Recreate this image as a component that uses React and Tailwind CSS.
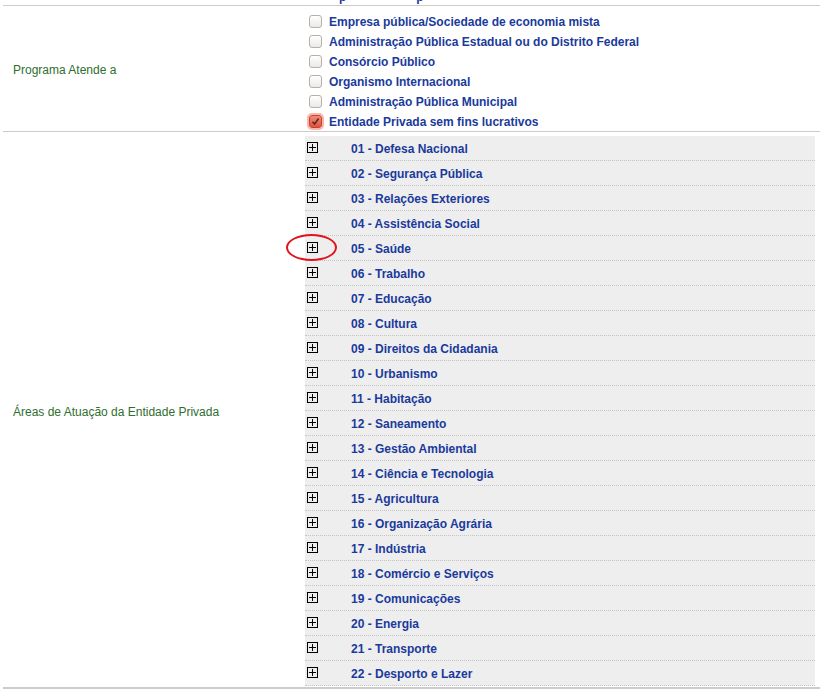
import React from "react";

const options = [
  { label: "Empresa pública/Sociedade de economia mista", checked: false },
  { label: "Administração Pública Estadual ou do Distrito Federal", checked: false },
  { label: "Consórcio Público", checked: false },
  { label: "Organismo Internacional", checked: false },
  { label: "Administração Pública Municipal", checked: false },
  { label: "Entidade Privada sem fins lucrativos", checked: true },
];

const areas = [
  "01 - Defesa Nacional",
  "02 - Segurança Pública",
  "03 - Relações Exteriores",
  "04 - Assistência Social",
  "05 - Saúde",
  "06 - Trabalho",
  "07 - Educação",
  "08 - Cultura",
  "09 - Direitos da Cidadania",
  "10 - Urbanismo",
  "11 - Habitação",
  "12 - Saneamento",
  "13 - Gestão Ambiental",
  "14 - Ciência e Tecnologia",
  "15 - Agricultura",
  "16 - Organização Agrária",
  "17 - Indústria",
  "18 - Comércio e Serviços",
  "19 - Comunicações",
  "20 - Energia",
  "21 - Transporte",
  "22 - Desporto e Lazer",
];

function PlusBox() {
  return (
    <svg width="11" height="11" viewBox="0 0 11 11" className="shrink-0">
      <rect x="0.5" y="0.5" width="10" height="10" fill="none" stroke="#000" strokeWidth="1" />
      <line x1="2" y1="5.5" x2="9" y2="5.5" stroke="#000" strokeWidth="1" />
      <line x1="5.5" y1="2" x2="5.5" y2="9" stroke="#000" strokeWidth="1" />
    </svg>
  );
}

function Checkbox({ checked }) {
  if (checked) {
    return (
      <div className="w-[13px] h-[13px] shrink-0 rounded-[3px] border border-[#c9402e] bg-gradient-to-b from-[#f08a78] to-[#e0523e] shadow-[0_0_0_2px_#f9b7aa] flex items-center justify-center">
        <svg width="9" height="9" viewBox="0 0 9 9">
          <path d="M1.5 4.8 L3.6 7 L7.6 1.6" fill="none" stroke="#5a2a22" strokeWidth="1.6" />
        </svg>
      </div>
    );
  }
  return (
    <div className="w-[13px] h-[13px] shrink-0 rounded-[3px] border border-[#b5b0a8] bg-gradient-to-b from-[#ffffff] to-[#ebe9e6]" />
  );
}

export default function App() {
  return (
    <div
      className="w-[824px] h-[693px] bg-white overflow-hidden text-[12px]"
      style={{ fontFamily: '"Liberation Sans", Arial, sans-serif' }}
    >
      <div className="ml-[3px] mr-[4px]">
        {/* clipped previous row */}
        <div className="h-[5px] overflow-hidden">
          <div className="flex mt-[-10px] leading-[14px] font-bold text-[#1a3a9c]">
            <span className="ml-[336px]">p</span>
            <span className="ml-[70px]">p</span>
          </div>
        </div>
        <div className="h-px bg-[#cccccc]" />

        {/* Programa Atende a */}
        <div className="flex items-center">
          <div className="w-[302px] shrink-0 pl-[10px] text-[#2f6e2f] mt-[2px]">Programa Atende a</div>
          <div className="pt-[5px] pl-[4px] flex flex-col">
            {options.map((o) => (
              <div key={o.label} className="h-[20px] flex items-center gap-[7px]">
                <Checkbox checked={o.checked} />
                <span className="font-bold text-[#1a3a9c] leading-none mt-[2px]">{o.label}</span>
              </div>
            ))}
          </div>
        </div>
        <div className="h-px bg-[#cccccc]" />

        {/* Áreas de Atuação */}
        <div className="flex items-center pt-[4px] pb-[1px]">
          <div className="w-[302px] shrink-0 pl-[10px] text-[#2f6e2f] mt-[2px]">Áreas de Atuação da Entidade Privada</div>
          <div className="w-[510px] bg-[#eeeeee] flex flex-col">
            {areas.map((a, i) => (
              <div
                key={a}
                className="relative h-[25px] flex items-center border-b border-dotted border-[#c4c4c4] pl-[2px]"
              >
                <div className="mt-[-2px]">
                  <PlusBox />
                </div>
                <span className="ml-[33px] font-bold text-[#1a3a9c] leading-none mt-[2px]">{a}</span>
                {i === 4 && (
                  <div className="absolute left-[-19px] top-[-2px] w-[51px] h-[27px] rounded-[50%] border-2 border-[#e0141e]" />
                )}
              </div>
            ))}
          </div>
        </div>
        <div className="h-[2px] bg-[#cccccc]" />
      </div>
    </div>
  );
}
